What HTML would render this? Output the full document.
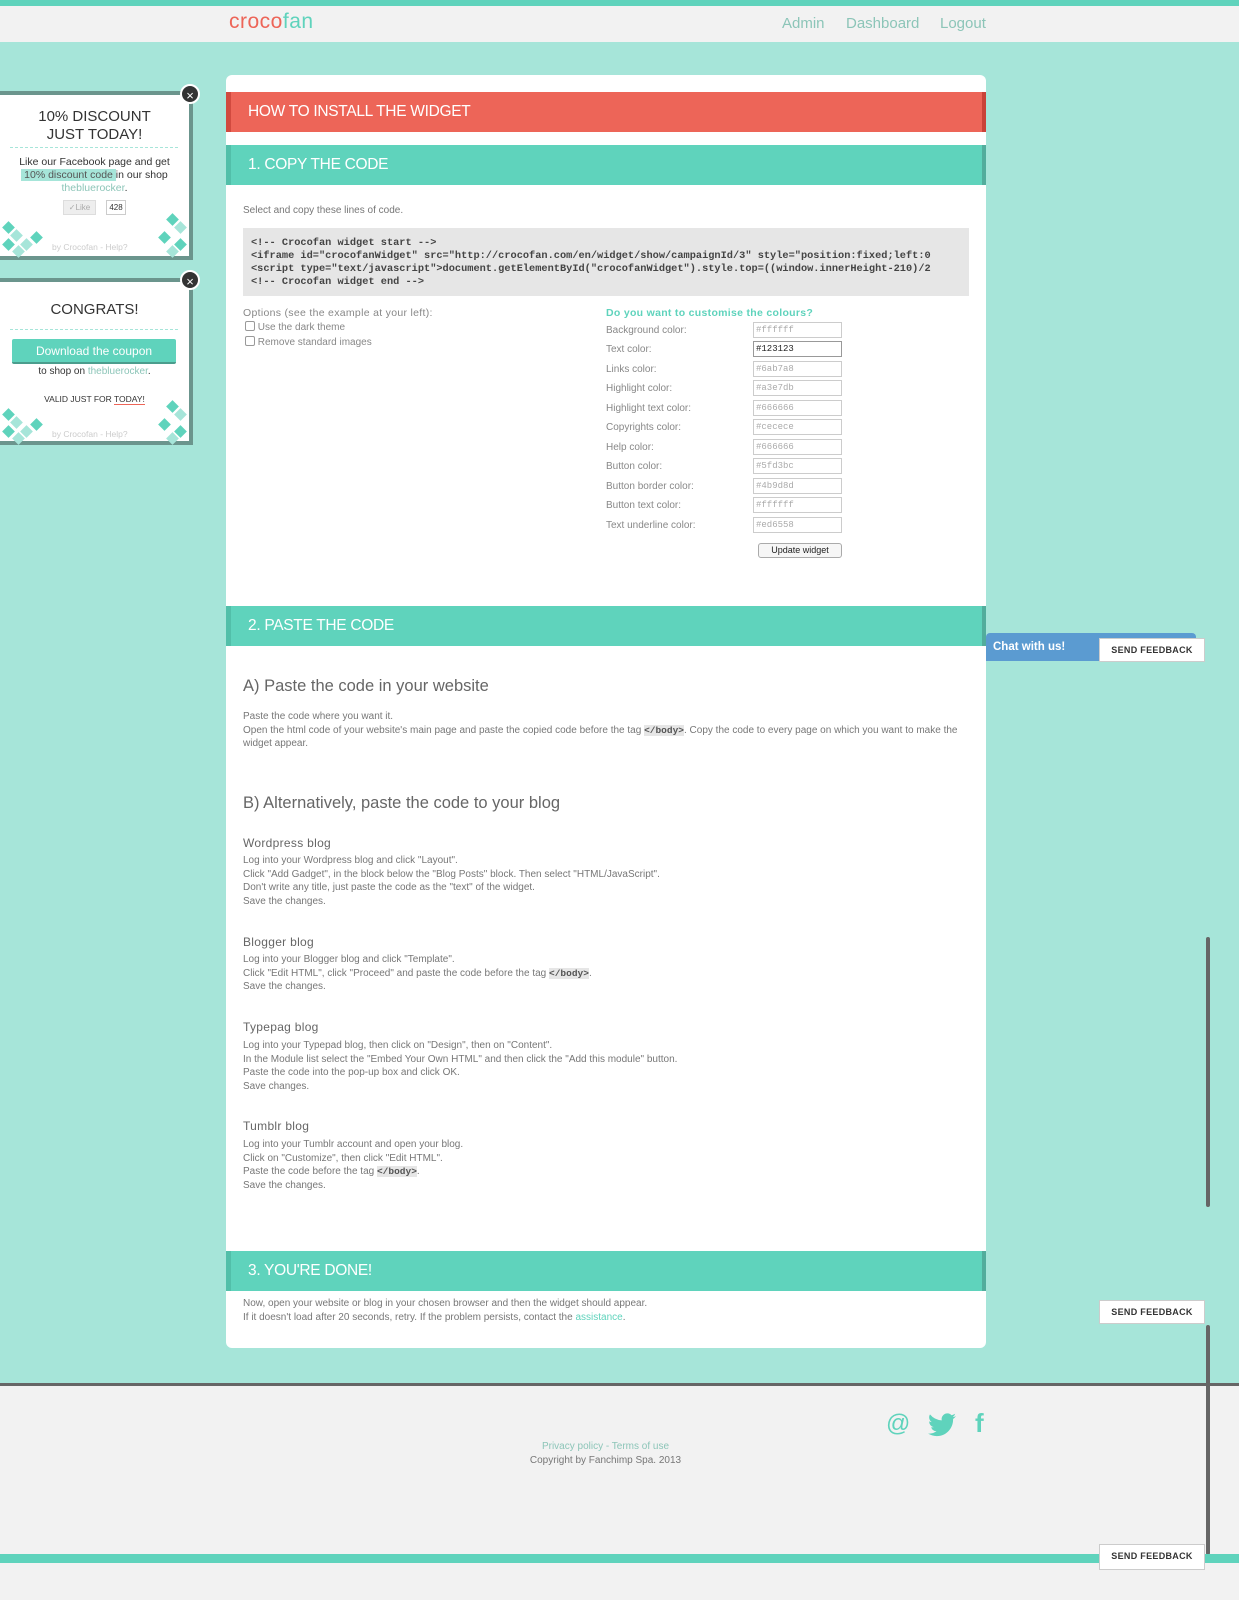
<!DOCTYPE html>
<html><head><meta charset="utf-8"><style>
*{margin:0;padding:0;box-sizing:border-box}
body{width:1239px;height:1600px;position:relative;background:#a6e5d9;font-family:"Liberation Sans",sans-serif;color:#777;overflow:hidden}
.abs{position:absolute}
.top{left:0;top:0;width:1239px;height:6px;background:#5fd3bc}
.nav{left:0;top:6px;width:1239px;height:36px;background:#f2f2f2}
.logo{left:229px;top:10px;font-size:21px;color:#ed6558;letter-spacing:0.5px}
.logo span{color:#5fd3bc}
.navl{top:15px;font-size:15px;color:#8cc5b8}
.card{left:226px;top:75px;width:760px;height:1273px;background:#fff;border-radius:6px}
.hd{position:absolute;left:0;width:760px;height:40px;color:#fff;font-size:15.5px;padding:11px 17px;letter-spacing:-0.3px}
.red{background:#ed6558;border-left:5px solid #d14a3f;border-right:4px solid #c94338}
.teal{background:#5fd3bc;border-left:5px solid #52bfa9;border-right:4px solid #52ad9c}
.t{font-size:10px;color:#777;line-height:13.5px}
.code{left:17px;top:153px;width:726px;height:68px;background:#e6e6e6;font-family:"Liberation Mono",monospace;font-size:10.3px;color:#444;padding:9px 8px;line-height:13px;white-space:pre;overflow:hidden;font-weight:bold}
.lab{font-size:10px;color:#888}
.inp{position:absolute;left:527px;width:89px;height:16px;border:1px solid #ccc;font-size:9px;font-family:"Liberation Mono",monospace;color:#aaa;padding:2px 2px}
h3{font-weight:normal;font-size:16.5px;color:#666;position:absolute;left:17px}
h4{font-weight:normal;font-size:12px;color:#666;position:absolute;left:17px;letter-spacing:0.3px}
.tag{background:#e6e6e6;font-family:"Liberation Mono",monospace;font-weight:bold;color:#555;font-size:9.5px}
.w{left:0;width:193px;background:#fff;border:4px solid #6b958d;border-left:none}
.x{width:20px;height:20px;border-radius:50%;background:#333;color:#fff;font-size:13px;text-align:center;line-height:19px;border:2px solid #fff}
.dash{border-top:1px dashed #a6e5d9;position:absolute;left:10px;width:168px}
.d{position:absolute;width:9px;height:9px;transform:rotate(45deg);background:#5fd3bc}
.dl{background:#a6e5d9}
.sf{background:#fff;border:1px solid #ccc;font-size:9px;font-weight:bold;color:#333;text-align:center;line-height:22px;width:106px;height:24px;letter-spacing:0.3px}
</style></head><body>
<div class="abs top"></div>
<div class="abs nav"></div>
<div class="abs logo">croco<span>fan</span></div>
<div class="abs navl" style="left:782px">Admin</div>
<div class="abs navl" style="left:846px">Dashboard</div>
<div class="abs navl" style="left:940px">Logout</div>

<!-- widget 1 -->
<div class="abs w" style="top:91px;height:169px">
 <div style="text-align:center;font-size:15px;color:#333;margin-top:13px;line-height:18px">10% DISCOUNT<br>JUST TODAY!</div>
 <div class="dash" style="top:52px"></div>
 <div style="text-align:center;font-size:10.5px;color:#333;margin-top:12px;line-height:13px">Like our Facebook page and get<br><span style="background:#a6e5d9;color:#555">&nbsp;10% discount code </span> in our shop<br><span style="color:#8cc5b8">thebluerocker</span>.</div>
 <div class="abs" style="left:63px;top:105px;width:33px;height:15px;background:#eee;border:1px solid #ddd;font-size:8px;color:#aaa;text-align:center;line-height:13px">✓Like</div>
 <div class="abs" style="left:106px;top:105px;width:20px;height:15px;border:1px solid #ccc;font-size:8px;color:#333;text-align:center;line-height:13px">428</div>
 <div class="abs" style="left:52px;top:147px;font-size:8.5px;color:#ccc">by Crocofan - Help?</div>
 <div class="d" style="left:4px;top:128px"></div><div class="d dl" style="left:12px;top:136px"></div><div class="d" style="left:4px;top:145px"></div><div class="d dl" style="left:22px;top:145px"></div><div class="d" style="left:32px;top:138px"></div><div class="d dl" style="left:14px;top:152px"></div>
 <div class="d" style="left:168px;top:120px"></div><div class="d dl" style="left:176px;top:128px"></div><div class="d" style="left:160px;top:138px"></div><div class="d" style="left:176px;top:145px"></div><div class="d dl" style="left:168px;top:152px"></div>
</div>
<div class="abs x" style="left:180px;top:84px">×</div>

<!-- widget 2 -->
<div class="abs w" style="top:278px;height:167px">
 <div style="text-align:center;font-size:15px;color:#333;margin-top:19px">CONGRATS!</div>
 <div class="dash" style="top:47px"></div>
 <div class="abs" style="left:12px;top:57px;width:164px;height:25px;background:#5fd3bc;border-bottom:2px solid #4b9d8d;color:#fff;font-size:12px;text-align:center;line-height:24px;border-radius:2px">Download the coupon</div>
 <div class="abs" style="left:0;width:189px;top:84px;text-align:center;font-size:10px;color:#333">to shop on <span style="color:#8cc5b8">thebluerocker</span>.</div>
 <div class="abs" style="left:0;width:189px;top:112px;text-align:center;font-size:8.5px;color:#333">VALID JUST FOR <span style="border-bottom:1px solid #ed6558">TODAY!</span></div>
 <div class="abs" style="left:52px;top:147px;font-size:8.5px;color:#ccc">by Crocofan - Help?</div>
 <div class="d" style="left:4px;top:128px"></div><div class="d dl" style="left:12px;top:136px"></div><div class="d" style="left:4px;top:145px"></div><div class="d dl" style="left:22px;top:145px"></div><div class="d" style="left:32px;top:138px"></div><div class="d dl" style="left:14px;top:152px"></div>
 <div class="d" style="left:168px;top:120px"></div><div class="d dl" style="left:176px;top:128px"></div><div class="d" style="left:160px;top:138px"></div><div class="d" style="left:176px;top:145px"></div><div class="d dl" style="left:168px;top:152px"></div>
</div>
<div class="abs x" style="left:180px;top:270px">×</div>

<div class="abs card">
 <div class="hd red" style="top:17px">HOW TO INSTALL THE WIDGET</div>
 <div class="hd teal" style="top:70px">1. COPY THE CODE</div>
 <div class="abs t" style="left:17px;top:129px">Select and copy these lines of code.</div>
 <div class="abs code">&lt;!-- Crocofan widget start --&gt;
&lt;iframe id="crocofanWidget" src="http://crocofan.com/en/widget/show/campaignId/3" style="position:fixed;left:0
&lt;script type="text/javascript"&gt;document.getElementById("crocofanWidget").style.top=((window.innerHeight-210)/2
&lt;!-- Crocofan widget end --&gt;</div>
 <div class="abs" style="left:17px;top:232px;font-size:10.5px;color:#888;letter-spacing:0.3px">Options (see the example at your left):</div>
 <div class="abs lab" style="left:19px;top:246px"><span style="display:inline-block;width:10px;height:10px;border:1px solid #999;border-radius:2px;vertical-align:-1px"></span> Use the dark theme</div>
 <div class="abs lab" style="left:19px;top:261px"><span style="display:inline-block;width:10px;height:10px;border:1px solid #999;border-radius:2px;vertical-align:-1px"></span> Remove standard images</div>
 <div class="abs" style="left:380px;top:232px;font-size:10.5px;color:#5fd3bc;font-weight:bold;letter-spacing:0.3px">Do you want to customise the colours?</div>
 <div class="abs lab" style="left:380px;top:250px">Background color:</div><div class="inp" style="top:247px">#ffffff</div>
 <div class="abs lab" style="left:380px;top:269px">Text color:</div><div class="inp" style="top:266px;color:#222;border-color:#999">#123123</div>
 <div class="abs lab" style="left:380px;top:289px">Links color:</div><div class="inp" style="top:286px">#6ab7a8</div>
 <div class="abs lab" style="left:380px;top:308px">Highlight color:</div><div class="inp" style="top:305px">#a3e7db</div>
 <div class="abs lab" style="left:380px;top:328px">Highlight text color:</div><div class="inp" style="top:325px">#666666</div>
 <div class="abs lab" style="left:380px;top:347px">Copyrights color:</div><div class="inp" style="top:344px">#cecece</div>
 <div class="abs lab" style="left:380px;top:367px">Help color:</div><div class="inp" style="top:364px">#666666</div>
 <div class="abs lab" style="left:380px;top:386px">Button color:</div><div class="inp" style="top:383px">#5fd3bc</div>
 <div class="abs lab" style="left:380px;top:406px">Button border color:</div><div class="inp" style="top:403px">#4b9d8d</div>
 <div class="abs lab" style="left:380px;top:425px">Button text color:</div><div class="inp" style="top:422px">#ffffff</div>
 <div class="abs lab" style="left:380px;top:445px">Text underline color:</div><div class="inp" style="top:442px">#ed6558</div>
 <div class="abs" style="left:532px;top:468px;width:84px;height:15px;border:1px solid #aaa;border-radius:3px;background:#f6f6f6;font-size:9px;color:#222;text-align:center;line-height:13px">Update widget</div>

 <div class="hd teal" style="top:531px">2. PASTE THE CODE</div>
 <h3 style="top:602px">A) Paste the code in your website</h3>
 <div class="abs t" style="left:17px;top:635px;width:730px">Paste the code where you want it.<br>Open the html code of your website's main page and paste the copied code before the tag <span class="tag">&lt;/body&gt;</span>. Copy the code to every page on which you want to make the widget appear.</div>
 <h3 style="top:719px">B) Alternatively, paste the code to your blog</h3>
 <h4 style="top:761px">Wordpress blog</h4>
 <div class="abs t" style="left:17px;top:779px">Log into your Wordpress blog and click "Layout".<br>Click "Add Gadget", in the block below the "Blog Posts" block. Then select "HTML/JavaScript".<br>Don't write any title, just paste the code as the "text" of the widget.<br>Save the changes.</div>
 <h4 style="top:860px">Blogger blog</h4>
 <div class="abs t" style="left:17px;top:878px">Log into your Blogger blog and click "Template".<br>Click "Edit HTML", click "Proceed" and paste the code before the tag <span class="tag">&lt;/body&gt;</span>.<br>Save the changes.</div>
 <h4 style="top:945px">Typepag blog</h4>
 <div class="abs t" style="left:17px;top:964px">Log into your Typepad blog, then click on "Design", then on "Content".<br>In the Module list select the "Embed Your Own HTML" and then click the "Add this module" button.<br>Paste the code into the pop-up box and click OK.<br>Save changes.</div>
 <h4 style="top:1044px">Tumblr blog</h4>
 <div class="abs t" style="left:17px;top:1063px">Log into your Tumblr account and open your blog.<br>Click on "Customize", then click "Edit HTML".<br>Paste the code before the tag <span class="tag">&lt;/body&gt;</span>.<br>Save the changes.</div>

 <div class="hd teal" style="top:1176px">3. YOU'RE DONE!</div>
 <div class="abs t" style="left:17px;top:1222px">Now, open your website or blog in your chosen browser and then the widget should appear.<br>If it doesn't load after 20 seconds, retry. If the problem persists, contact the <span style="color:#5fd3bc">assistance</span>.</div>
</div>

<div class="abs" style="left:986px;top:633px;width:210px;height:28px;background:#5b9bd1;border-radius:4px 4px 0 0"></div>
<div class="abs" style="left:993px;top:641px;font-size:11.5px;color:#fff;font-weight:bold">Chat with us!</div>
<div class="abs sf" style="left:1099px;top:638px">SEND FEEDBACK</div>
<div class="abs sf" style="left:1099px;top:1300px">SEND FEEDBACK</div>
<div class="abs" style="left:1206px;top:937px;width:4px;height:270px;background:#666;border-radius:2px"></div>

<div class="abs" style="left:0;top:1383px;width:1239px;height:3px;background:#666"></div>
<div class="abs" style="left:0;top:1386px;width:1239px;height:168px;background:#f2f2f2"></div>
<div class="abs" style="left:1206px;top:1325px;width:4px;height:230px;background:#666;border-radius:2px"></div>
<div class="abs" style="left:886px;top:1410px;font-size:24px;color:#5fd3bc">@</div>
<svg class="abs" style="left:928px;top:1413px" width="28" height="24" viewBox="0 0 24 20"><path fill="#5fd3bc" d="M24 2.4a10 10 0 0 1-2.8.8A5 5 0 0 0 23.3.4a10 10 0 0 1-3.1 1.2A4.9 4.9 0 0 0 11.8 6 14 14 0 0 1 1.7.9a4.9 4.9 0 0 0 1.5 6.6 5 5 0 0 1-2.2-.6 4.9 4.9 0 0 0 3.9 4.9 5 5 0 0 1-2.2.1 4.9 4.9 0 0 0 4.6 3.4A9.9 9.9 0 0 1 0 17.3 14 14 0 0 0 7.5 19.5c9 0 14-7.5 14-14v-.6A10 10 0 0 0 24 2.4z"/></svg>
<div class="abs" style="left:975px;top:1408px;font-size:26px;color:#5fd3bc;font-weight:bold">f</div>
<div class="abs" style="left:500px;top:1440px;width:211px;text-align:center;font-size:10px;line-height:13.5px;color:#777"><span style="color:#8cc5b8">Privacy policy - Terms of use</span><br>Copyright by Fanchimp Spa. 2013</div>
<div class="abs" style="left:0;top:1554px;width:1239px;height:9px;background:#5fd3bc"></div>
<div class="abs" style="left:0;top:1563px;width:1239px;height:37px;background:#f2f2f2"></div>
<div class="abs sf" style="left:1099px;top:1544px;height:26px">SEND FEEDBACK</div>
</body></html>
